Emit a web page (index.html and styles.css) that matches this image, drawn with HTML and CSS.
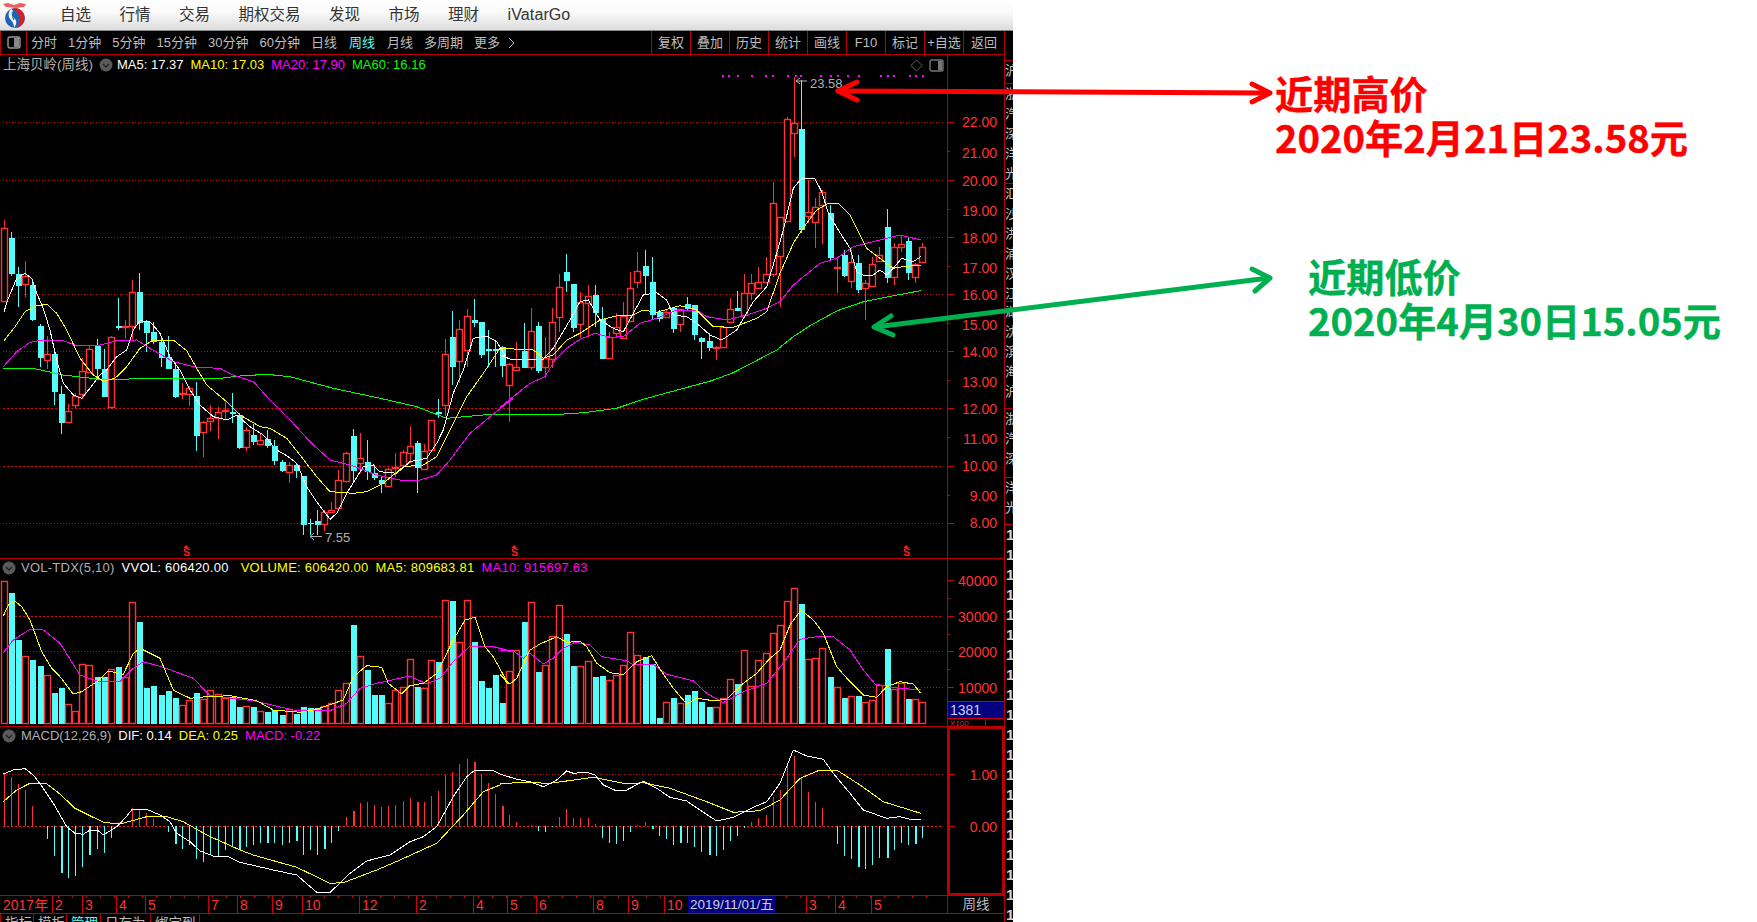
FILE: index.html
```html
<!DOCTYPE html>
<html lang="zh-CN">
<head>
<meta charset="utf-8">
<title>上海贝岭(周线)</title>
<link rel="stylesheet" href="styles.css">
</head>
<body>
<div class="page">
  <div class="terminal">
    <header class="menubar">
      <svg class="logo" viewBox="0 0 30 30" aria-hidden="true">
        <path d="M3 4 L8 3 L14 5 L20 3 L26 4 L24 7 L16 8 L6 7 Z" fill="#e8615f"/>
        <circle cx="15" cy="18" r="10" fill="#1f63b5"/>
        <path d="M13 8.2 A10 10 0 0 1 16 28 C23 22 20 13 13 8.2 Z" fill="#e21d1d"/>
        <path d="M11 9 C15 11 11 15 14 18 C18 21 16 25 14 28 C14 24 13 22 10 19 C8 16 8 12 11 9 Z" fill="#f4f4f4"/>
        <path d="M12 12 C13 15 12 17 14 20" stroke="#1f63b5" stroke-width="1.2" fill="none"/>
      </svg>
      <nav class="menu">
        <span>自选</span><span>行情</span><span>交易</span><span>期权交易</span><span>发现</span><span>市场</span><span>理财</span><span class="menu-latin">iVatarGo</span>
      </nav>
    </header>
    <div class="body">
      <div class="main">
        <div class="toolbar">
          <div class="toggle">
            <svg class="icon-panel" viewBox="0 0 14 13" aria-hidden="true"><rect x="1" y="1" width="12" height="11" rx="2" fill="none" stroke="#999" stroke-width="1.4"/><rect x="7" y="2" width="5" height="9" fill="#888"/></svg>
          </div>
          <div class="periods">
            <span>分时</span><span>1分钟</span><span>5分钟</span><span>15分钟</span><span>30分钟</span><span>60分钟</span><span>日线</span><span class="active">周线</span><span class="after-active">月线</span><span>多周期</span><span>更多</span>
            <svg class="chev" viewBox="0 0 7 12" aria-hidden="true"><path d="M1 1 L6 6 L1 11" fill="none" stroke="#bbb"/></svg>
          </div>
          <div class="actions">
            <span>复权</span><span>叠加</span><span>历史</span><span>统计</span><span>画线</span><span>F10</span><span>标记</span><span>+自选</span><span>返回</span>
          </div>
        </div>

        <section class="pane pane-price">
          <div class="plot">
            <svg id="price" width="947" height="503" viewBox="0 55 947 503"></svg>
            <div class="legend">
              <span class="c-grey name">上海贝岭(周线)</span>
              <svg class="dot dot-name" viewBox="0 0 14 14" aria-hidden="true"><circle cx="7" cy="7" r="6.5" fill="#5a5a5a"/><path d="M4 6 L7 9 L10 6" stroke="#222" stroke-width="1.4" fill="none"/></svg>
              <span class="c-white">MA5: 17.37</span>
              <span class="c-yellow">MA10: 17.03</span>
              <span class="c-magenta">MA20: 17.90</span>
              <span class="c-green">MA60: 16.16</span>
            </div>
            <div class="tools">
              <svg class="tool-diamond" viewBox="0 0 14 14" aria-hidden="true"><path d="M7 1 L13 7 L7 13 L1 7 Z" fill="none" stroke="#666"/></svg>
              <svg class="tool-panel" viewBox="0 0 15 13" aria-hidden="true"><rect x="1" y="1" width="13" height="11" rx="2" fill="none" stroke="#777" stroke-width="1.4"/><rect x="9" y="2" width="4" height="9" fill="#777"/></svg>
            </div>
          </div>
          <div class="axis"><svg id="price-axis" width="56" height="503" viewBox="948 55 56 503"></svg></div>
        </section>

        <section class="pane pane-vol">
          <div class="plot">
            <svg id="vol" width="947" height="167" viewBox="0 559 947 167"></svg>
            <div class="legend legend-vol legend-spaced">
              <svg class="dot" viewBox="0 0 14 14" aria-hidden="true"><circle cx="7" cy="7" r="6.5" fill="#5a5a5a"/><path d="M4 6 L7 9 L10 6" stroke="#222" stroke-width="1.4" fill="none"/></svg>
              <span class="c-grey">VOL-TDX(5,10)</span>
              <span class="c-white">VVOL: 606420.00</span>
              <span class="c-yellow gap-wide">VOLUME: 606420.00</span>
              <span class="c-yellow">MA5: 809683.81</span>
              <span class="c-magenta">MA10: 915697.63</span>
            </div>
          </div>
          <div class="axis"><svg id="vol-axis" width="56" height="167" viewBox="948 559 56 167"></svg></div>
        </section>

        <section class="pane pane-macd">
          <div class="plot">
            <svg id="macd" width="947" height="168" viewBox="0 727 947 168"></svg>
            <div class="legend legend-vol">
              <svg class="dot" viewBox="0 0 14 14" aria-hidden="true"><circle cx="7" cy="7" r="6.5" fill="#5a5a5a"/><path d="M4 6 L7 9 L10 6" stroke="#222" stroke-width="1.4" fill="none"/></svg>
              <span class="c-grey">MACD(12,26,9)</span>
              <span class="c-white">DIF: 0.14</span>
              <span class="c-yellow">DEA: 0.25</span>
              <span class="c-magenta">MACD: -0.22</span>
            </div>
          </div>
          <div class="axis"><svg id="macd-axis" width="56" height="168" viewBox="948 727 56 168"></svg></div>
        </section>

        <section class="pane pane-date">
          <div class="plot"><svg id="dates" width="947" height="17" viewBox="0 896 947 17"></svg></div>
          <div class="axis period-cell">周线</div>
        </section>

        <div class="tabs">
          <span>指标</span><span>模板</span><span class="active">管理</span><span>日存为</span><span>绑定到</span>
        </div>
      </div>
      <aside class="strip" id="strip"></aside>
    </div>
  </div>

  <div class="notes">
    <p class="note note-high">近期高价<br>2020年2月21日23.58元</p>
    <p class="note note-low">近期低价<br>2020年4月30日15.05元</p>
  </div>

  <svg class="arrows" width="1757" height="922" viewBox="0 0 1757 922" aria-hidden="true">
    <g class="arrow-red">
      <path d="M838 91 L1269 93"/>
      <path d="M857 82 L838 91 L857 100"/>
      <path d="M1252 84 L1270 93 L1252 102"/>
    </g>
    <g class="arrow-green">
      <path d="M875 327 L1269 278"/>
      <path d="M891 316 L874 327 L893 335"/>
      <path d="M1252 269 L1270 278 L1255 291"/>
    </g>
  </svg>
</div>
<script src="chart.js"></script>
</body>
</html>
```

FILE: styles.css
```css
* { box-sizing: border-box; }
html, body { margin: 0; padding: 0; background: #fff; }
.page {
  position: relative;
  display: flex;
  width: 1757px;
  height: 922px;
  overflow: hidden;
  font-family: "Liberation Sans", "Noto Sans CJK SC", sans-serif;
}
.terminal {
  width: 1013px;
  height: 922px;
  display: flex;
  flex-direction: column;
  flex: none;
  background: #000;
}
.menubar {
  height: 31px;
  flex: none;
  display: flex;
  align-items: center;
  background: linear-gradient(#fff, #fafafa 40%, #dcdcdc);
  border-bottom: 1px solid #8a8a8a;
}
.logo { width: 30px; height: 30px; flex: none; }
.menu {
  display: flex;
  gap: 28.5px;
  margin-left: 30px;
  font-size: 15.5px;
  color: #333;
  line-height: 28px;
}
.menu-latin { font-size: 16px; letter-spacing: 0.1px; }
.body { flex: 1; display: flex; min-height: 0; }
.main {
  width: 1005px;
  flex: none;
  display: flex;
  flex-direction: column;
  border-right: 1px solid #b80000;
}
.toolbar {
  height: 24px;
  flex: none;
  display: flex;
  align-items: stretch;
  border-bottom: 1px solid #b80000;
  color: #bdbdbd;
  font-size: 13px;
  line-height: 23px;
}
.toggle {
  width: 27px;
  flex: none;
  display: flex;
  align-items: center;
  justify-content: center;
  border-left: 1px solid #b80000;
  border-right: 1px solid #b80000;
}
.icon-panel { width: 14px; height: 13px; }
.periods { display: flex; gap: 11px; margin-left: 4px; align-items: center; }
.periods .active { margin-left: 1px; }
.periods .after-active { margin-left: 1px; }
.periods .active, .tabs .active { color: #54fcfc; }
.chev { width: 7px; height: 12px; margin-left: -3px; }
.actions { display: flex; margin-left: auto; }
.actions span {
  width: 39px;
  text-align: center;
  border-left: 1px solid #b80000;
}
.actions span:last-child { width: 41px; }
.pane { display: flex; flex: none; border-bottom: 1px solid #b80000; }
.pane-price { height: 504px; }
.pane-vol { height: 168px; }
.pane-macd { height: 169px; }
.pane-date { height: 18px; }
.plot { position: relative; width: 947px; flex: none; }
.plot svg:first-child { display: block; }
.axis { width: 57px; flex: none; border-left: 1px solid #b80000; }
.axis svg { display: block; }
.legend {
  position: absolute;
  left: 3px;
  top: 1px;
  display: flex;
  align-items: center;
  gap: 7px;
  font-size: 13px;
  line-height: 18px;
  white-space: nowrap;
}
.legend-vol { left: 2px; top: 0; }
.legend-spaced { letter-spacing: 0.25px; }
.legend .name { font-size: 13.5px; }
.legend .gap-wide { margin-left: 5px; }
.dot { width: 14px; height: 14px; flex: none; margin-right: -2px; }
.dot-name { margin-left: -1px; margin-right: -3px; }
.c-grey { color: #b0b0b0; }
.c-white { color: #fff; }
.c-yellow { color: #ff0; }
.c-magenta { color: #f0f; }
.c-green { color: #0f0; }
.tools {
  position: absolute;
  right: 3px;
  top: 4px;
  display: flex;
  align-items: center;
  gap: 6px;
}
.tool-diamond { width: 13px; height: 13px; display: block; }
.tool-panel { width: 15px; height: 13px; display: block; }
.period-cell { color: #bdbdbd; font-size: 13.5px; line-height: 17px; text-align: center; }
.tabs {
  height: 8px;
  flex: none;
  display: flex;
  overflow: hidden;
  color: #bdbdbd;
  font-size: 13.5px;
  line-height: 14px;
}
.tabs span {
  padding: 3px 4px 0;
  height: 20px;
  border-right: 1px solid #b80000;
  white-space: nowrap;
}
.tabs span:nth-child(1) { width: 34px; border-left: 1px solid #b80000; }
.tabs span:nth-child(2) { width: 33px; }
.tabs span:nth-child(3) { width: 34px; }
.tabs span:nth-child(4) { width: 50px; }
.tabs span:nth-child(5) { width: 49px; }
.strip {
  width: 8px;
  flex: none;
  overflow: hidden;
  padding-top: 29px;
  color: #c8c8c8;
}
.strip-group { border-top: 1px solid #b80000; overflow: hidden; }
.strip-row {
  height: 20px;
  font-size: 13px;
  line-height: 20px;
  white-space: nowrap;
  overflow: hidden;
  width: 8px;
}
.strip-one {
  font-size: 15px;
  font-weight: 700;
  padding-left: 1px;
  color: #d4d4d4;
}
.notes { flex: 1; padding-top: 71px; }
.note {
  margin: 0;
  font-family: "Noto Sans CJK SC", sans-serif;
  font-weight: 700;
  font-size: 38.2px;
  line-height: 44px;
  white-space: nowrap;
  -webkit-text-stroke: 0.4px currentColor;
}
.note-high { margin-left: 262px; color: #f00; }
.note-low { margin-left: 295px; margin-top: 95px; color: #00b050; }
.arrows { position: absolute; left: 0; top: 0; pointer-events: none; }
.arrows path { fill: none; stroke-linecap: round; stroke-linejoin: round; }
.arrow-red path { stroke: #f00; stroke-width: 5; }
.arrow-green path { stroke: #00b050; stroke-width: 5; }

/* chart drawing */
.grid { stroke: #d40000; stroke-dasharray: 1 2; fill: none; }
.grid-bold { stroke: #e00000; stroke-dasharray: 2 2; fill: none; }
.zero { stroke: #ff1a1a; stroke-dasharray: 2 2; fill: none; }
.body-r { fill: #000; stroke: #ff3232; stroke-width: 1.4; }
.body-c { fill: #54fcfc; }
.ma { fill: none; stroke-width: 1; shape-rendering: crispEdges; }
.ma-white { stroke: #fff; }
.ma-yellow { stroke: #ff0; }
.ma-magenta { stroke: #f0f; }
.ma-green { stroke: #0f0; }
.pin { fill: #f0f; }
.mark { fill: #b0b0b0; font-size: 13px; font-family: "Liberation Sans", sans-serif; }
.mark-arrow { stroke: #b0b0b0; fill: none; }
.s-mark { fill: #ff1a1a; font-size: 11px; font-weight: 700; font-family: "Liberation Sans", sans-serif; }
.tick { stroke: #d00000; shape-rendering: crispEdges; }
.axis-label { fill: #ff3232; font-size: 14px; font-family: "Liberation Sans", sans-serif; text-anchor: end; }
.box-line { stroke: #b80000; fill: none; stroke-width: 2; }
.vol-box { fill: #000080; }
.vol-box-text { fill: #c8d0ff; font-size: 14px; font-family: "Liberation Sans", sans-serif; }
.vol-box-under { fill: #c03030; font-size: 8px; font-family: "Liberation Sans", sans-serif; }
.date-sep { stroke: #d00000; shape-rendering: crispEdges; }
.date-label { fill: #ff3232; font-size: 14px; font-family: "Liberation Sans", "Noto Sans CJK SC", sans-serif; }
.date-box { fill: #000080; }
.date-box-text { fill: #d0d0d0; font-size: 13.5px; font-family: "Liberation Sans", "Noto Sans CJK SC", sans-serif; }
```

FILE: chart.js
```js
var NS = 'http://www.w3.org/2000/svg';
function el(tag, attrs, parent, text) {
  var n = document.createElementNS(NS, tag);
  for (var k in attrs) n.setAttribute(k, attrs[k]);
  if (text !== undefined) n.textContent = text;
  parent.appendChild(n);
  return n;
}
function $(id) { return document.getElementById(id); }
function cx(i) { return Math.round(4 + i * 7.117); }

/* [red?, high, bodyTop, bodyBottom, low] in page pixels */
var C = [
[1,220,228,302,302],[0,232,238,274,276],[0,267,274,286,307],[1,261,276,285,297],[0,280,285,320,321],
[0,324,326,358,367],[1,336,354,361,369],[0,349,354,392,405],[0,386,394,423,434],[1,404,411,423,423],
[1,393,396,406,408],[1,358,371,395,399],[1,345,349,373,373],[0,339,346,369,380],[0,349,369,397,397],
[1,336,337,408,409],[0,298,326,328,330],[1,320,326,328,339],[1,280,292,327,339],[0,273,292,323,330],
[0,320,322,333,352],[0,322,332,342,344],[0,336,342,358,367],[0,336,357,369,369],[0,363,369,397,398],
[1,383,393,395,399],[1,386,388,395,406],[0,382,396,436,451],[1,421,422,433,457],[1,405,418,422,431],
[1,407,412,419,439],[1,400,410,412,420],[0,393,412,414,423],[0,413,415,448,449],[1,427,430,448,451],
[0,424,435,442,445],[1,434,440,445,445],[0,430,439,446,448],[0,440,446,461,465],[0,460,462,471,472],
[1,462,465,473,483],[0,463,465,471,478],[0,476,476,525,535],[0,519,523,524,535],[0,510,521,525,535],
[1,510,512,525,531],[1,502,510,513,513],[1,470,480,509,509],[1,452,453,482,482],[0,429,436,471,481],
[1,433,458,464,473],[0,440,462,472,480],[0,465,473,478,480],[0,477,480,484,493],[1,468,469,487,487],
[1,453,467,469,477],[1,450,452,466,468],[1,426,446,454,463],[0,441,443,468,493],[1,444,451,470,470],
[1,420,420,451,451],[0,399,412,414,418],[1,339,354,406,416],[0,311,337,367,385],[1,320,329,362,383],
[1,309,316,351,367],[0,299,320,323,327],[0,322,322,355,358],[0,330,349,351,367],[0,340,349,351,367],
[0,346,347,366,377],[1,363,364,386,422],[1,342,367,371,371],[0,323,351,368,368],[1,308,331,368,370],
[0,322,326,371,373],[1,337,358,368,378],[1,308,322,360,368],[1,274,287,318,332],[0,254,272,281,292],
[0,284,284,328,332],[1,292,302,325,338],[1,285,296,304,337],[0,285,295,313,327],[0,307,319,359,359],
[1,332,337,359,359],[1,313,327,334,336],[1,302,316,339,339],[1,272,288,322,322],[1,252,271,283,288],
[0,250,266,276,295],[0,257,282,315,320],[0,310,312,319,322],[1,310,312,318,318],[0,308,308,329,333],
[1,309,309,325,332],[0,297,304,309,310],[0,305,305,335,340],[0,337,338,342,359],[0,333,341,348,351],
[1,346,347,348,360],[1,327,327,348,348],[1,298,309,323,323],[0,291,308,311,311],[1,274,293,316,316],
[1,274,283,294,300],[1,267,282,289,289],[1,257,274,283,283],[1,182,203,275,277],[1,217,217,257,307],
[1,117,119,222,222],[1,77,123,134,157],[0,80,129,230,233],[1,180,212,217,223],[1,198,207,223,248],
[1,190,192,206,244],[0,205,213,258,260],[1,257,267,269,293],[0,250,255,276,277],[1,250,262,282,288],
[0,255,263,290,293],[1,280,283,289,320],[1,257,264,287,287],[1,247,255,262,262],[0,209,227,278,283],
[1,243,247,278,285],[1,236,244,248,252],[0,237,241,273,280],[1,263,264,278,283],[1,243,247,263,263]
];

/* volume bar tops as measured, y = 540 + v / 3 */
var V = [124,158,300,349,360,378,406,459,444,492,514,372,376,411,411,387,381,412,187,246,444,438,465,453,474,496,481,459,478,451,463,474,471,501,498,501,514,516,510,525,507,522,501,504,504,499,490,451,430,255,349,390,465,465,490,450,442,358,441,445,361,366,181,183,307,181,306,423,444,405,489,394,331,246,187,396,376,289,196,282,378,378,364,411,408,421,405,376,277,346,351,372,534,487,474,490,465,453,486,501,502,475,418,432,331,439,361,340,280,256,184,143,192,358,355,325,411,442,474,469,468,487,481,436,327,448,430,477,478,487];

/* macd bar ends, y = 720 + v / 3; 0 = no bar */
var M = [163,172,192,210,258,0,356,408,458,473,467,441,404,386,398,354,305,0,265,268,280,297,0,335,372,386,375,418,425,404,408,390,380,390,380,375,370,368,370,374,368,362,404,390,404,387,370,332,291,273,249,246,255,260,258,255,243,235,246,246,228,213,165,157,133,118,126,163,190,222,258,285,306,0,316,332,336,319,291,267,294,294,294,312,354,369,372,363,336,316,306,327,348,357,375,369,369,381,396,405,408,390,363,348,324,306,294,285,231,210,136,108,175,216,246,264,0,372,408,417,441,447,435,414,414,390,369,375,372,354];
var MBOLD = {8:1,12:1,24:1,33:1,37:1,41:1,45:1,49:1,58:1,66:1,70:1,91:1,95:1,99:1,120:1,124:1,128:1};

function poly(svg, cls, segs) {
  var pts = [];
  segs.forEach(function (s) {
    for (var i = 0; i < s[2].length; i += 2) {
      pts.push((s[0] + s[2][i] / 3).toFixed(1) + ',' + (s[1] + s[2][i + 1] / 3).toFixed(1));
    }
  });
  el('polyline', { 'class': 'ma ' + cls, points: pts.join(' ') }, svg);
}
function hline(svg, y, cls, x1, x2) {
  el('line', { x1: x1 === undefined ? 3 : x1, x2: x2 === undefined ? 943 : x2, y1: y + 0.5, y2: y + 0.5, 'class': cls }, svg);
}

/* ---------- price pane ---------- */
var price = $('price');
[[122, 0], [180, 0], [237, 0], [294, 0], [351, 0], [408, 1], [466, 1], [523, 0]].forEach(function (g) {
  hline(price, g[0], g[1] ? 'grid-bold' : 'grid');
});
C.forEach(function (c, i) {
  var x = cx(i), red = c[0];
  el('rect', { x: x, y: c[1], width: 1, height: c[4] - c[1], fill: red ? '#ff3232' : '#54fcfc', 'shape-rendering': 'crispEdges' }, price);
  if (red) {
    el('rect', { x: x - 2.5, y: c[2] + 0.5, width: 6, height: Math.max(c[3] - c[2] - 1, 1), 'class': 'body-r' }, price);
  } else {
    el('rect', { x: x - 2, y: c[2], width: 6, height: c[3] - c[2], 'class': 'body-c', 'shape-rendering': 'crispEdges' }, price);
  }
});
poly(price, 'ma-green', [
  [0, 280, [10,265,100,265,190,285,300,298,480,296,660,295,720,288,800,283,870,290,1000,325,1150,357,1250,380,1340,415,1450,405,1560,403]],
  [500, 280, [0,403,180,403,250,398,350,385,430,358,540,328,635,302,700,278,830,210,880,170,930,137,1010,93,1090,65,1180,47,1262,32]]
]);
poly(price, 'ma-magenta', [
  [0, 280, [10,260,50,215,90,187,130,180,190,182,230,197,300,195,350,182,410,180,450,205,520,245,590,262,660,265,700,285,760,305,810,360,870,420,930,485,990,540,1060,558,1130,585,1200,600,1260,600,1310,585,1350,540,1410,460,1470,410,1540,355]],
  [500, 280, [0,382,40,350,90,310,135,290,165,240,200,205,240,178,285,160,330,172,370,170,420,130,470,115,530,90,590,90,620,110,680,120,740,105,800,85,840,65]],
  [500, 0, [880,855,935,810,960,790,1010,775,1060,740,1160,715,1200,705,1262,720]]
]);
poly(price, 'ma-yellow', [
  [0, 280, [12,182,45,140,75,95,110,77,140,72,170,100,200,150,240,235,280,285,310,303,345,295,380,260,420,205,460,180,520,180,560,212,590,265,620,315,680,365,720,405,780,440,810,445,860,475,900,525,950,590,990,635,1060,640,1100,635,1150,610,1210,560,1270,555,1310,530,1350,450,1400,350,1450,280,1500,205]],
  [500, 280, [0,205,60,208,100,210,130,235,160,225,200,180,240,160,300,120,360,105,400,105,430,90,470,97,540,77,590,90,640,140,700,142,770,115,800,95]],
  [500, 0, [840,820,880,730,905,690,950,630,985,610,1015,610,1050,645,1100,745,1140,775,1180,805,1210,800,1262,795]]
]);
poly(price, 'ma-white', [
  [0, 280, [12,95,25,55]],
  [0, 0, [50,835,75,820,95,835,110,880]],
  [0, 280, [130,85,150,150,170,240,190,310,220,345,245,355,270,325,300,285,320,270,350,230,380,210,400,150,420,122,450,125,480,160,510,230,540,270,570,330,600,375,640,410,680,420,710,405,750,440,790,465,830,510,860,527,890,550,920,620,950,665,990,718,1010,700,1040,640,1090,560,1120,555,1140,575,1190,580,1230,545,1280,535,1310,490,1330,450,1360,340,1390,270,1420,175,1460,168,1490,185,1515,225]],
  [500, 280, [0,225,30,237,130,237,160,205,210,120,240,65,265,60,300,120,340,145,370,155,400,100,430,45,470,38,500,60,520,105,560,110,590,130,630,165,665,180,710,150]],
  [500, 0, [760,905,800,860,830,760,850,690,880,565,905,535,945,537,965,575,985,640,1015,690,1050,745,1070,815,1090,825,1120,825,1140,810,1160,825,1180,805,1205,775,1240,785,1262,770]]
]);
[665,685,710,752,795,815,860,885,900,960,990,1010,1040,1075,1140,1160,1180,1228,1245,1265].forEach(function (z) {
  el('rect', { x: Math.round(500 + z / 3), y: 75, width: 2, height: 2, 'class': 'pin' }, price);
});
el('path', { d: 'M807 81 H796 M800 78 L796 81 L800 84', 'class': 'mark-arrow' }, price);
el('text', { x: 810, y: 88, 'class': 'mark' }, price, '23.58');
el('path', { d: 'M322 536.5 H310 M314 533 L310 536.5 L314 540', 'class': 'mark-arrow' }, price);
el('text', { x: 325, y: 542, 'class': 'mark' }, price, '7.55');
[186, 514, 906].forEach(function (x) {
  el('path', { d: 'M' + (x - 3) + ' 548 L' + x + ' 545 L' + (x + 3) + ' 548 Z', fill: '#ff1a1a' }, price);
  el('text', { x: x - 3, y: 556, 'class': 's-mark' }, price, 'S');
});

var pa = $('price-axis');
[[122,'22.00',1,127],[151,'21.00',0,158],[180,'20.00',1,186],[209,'19.00',0,216],[237,'18.00',1,243],[266,'17.00',0,273],[294,'16.00',1,300],[323,'15.00',0,330],[351,'14.00',1,357],[380,'13.00',0,387],[408,'12.00',1,414],[437,'11.00',0,444],[466,'10.00',1,471],[495,'9.00',0,501],[523,'8.00',1,528]].forEach(function (t) {
  el('line', { x1: 948, x2: t[2] ? 954 : 950, y1: t[0] + 0.5, y2: t[0] + 0.5, 'class': 'tick' }, pa);
  el('text', { x: 997, y: t[3], 'class': 'axis-label' }, pa, t[1]);
});

/* ---------- volume pane ---------- */
var vol = $('vol');
hline(vol, 616, 'grid-bold'); hline(vol, 651, 'grid'); hline(vol, 687, 'grid');
V.forEach(function (v, i) {
  var x = cx(i), top = Math.round(540 + v / 3);
  if (C[i][0]) {
    el('rect', { x: x - 2.5, y: top + 0.5, width: 6, height: 724 - top - 1, 'class': 'body-r' }, vol);
  } else {
    el('rect', { x: x - 2, y: top, width: 6, height: 724 - top, 'class': 'body-c', 'shape-rendering': 'crispEdges' }, vol);
  }
});
poly(vol, 'ma-magenta', [
  [0, 540, [10,338,40,300,90,268,130,270,180,310,240,405,290,423,360,425,400,385,430,365,490,382,580,415,630,467,760,482,880,510,990,512,1040,490,1080,445,1130,430,1230,408,1280,432,1320,415,1360,365,1410,318,1480,320,1540,335]],
  [500, 540, [0,330,40,333,70,355,90,340,130,372,160,355,190,325,225,307,270,315,305,350,380,362,400,375,460,373,500,403,580,422,620,460,670,488,730,455,800,430,850,370,900,298,950,290,1000,290,1050,330,1090,390,1125,432,1180,443,1262,450]]
]);
poly(vol, 'ma-yellow', [
  [0, 540, [10,228,25,195,45,184,65,200,90,240,125,335,155,385,180,410,220,462,245,455,290,425,325,393,370,403,400,340,420,325,480,355,520,450,570,475,620,470,690,467,770,482,820,510,900,517,950,508,1030,480,1060,410,1100,377,1145,382,1165,430,1205,462,1230,437,1270,430,1310,400,1360,300,1395,240,1425,232,1455,320,1480,350,1525,432]],
  [500, 540, [0,403,30,432,50,415,90,330,120,312,170,290,200,307,240,304,260,320,290,370,330,398,370,404,410,365,455,347,485,395,520,445,560,492,590,475,640,482,680,478,730,430,770,400,810,355,840,330,870,255,903,210,940,240,970,280,1010,380,1050,425,1090,465,1130,472,1160,440,1200,425,1240,432,1262,460]]
]);

var va = $('vol-axis');
[[580,'40000',1,586],[598,'',0],[616,'30000',1,622],[634,'',0],[651,'20000',1,657],[669,'',0],[687,'10000',1,693]].forEach(function (t) {
  el('line', { x1: 948, x2: t[2] ? 954 : 950, y1: t[0] + 0.5, y2: t[0] + 0.5, 'class': 'tick' }, va);
  if (t[1]) el('text', { x: 997, y: t[3], 'class': 'axis-label' }, va, t[1]);
});
el('text', { x: 950, y: 725.5, 'class': 'vol-box-under' }, va, 'X100');
el('rect', { x: 948, y: 702, width: 56, height: 16, 'class': 'vol-box' }, va);
el('line', { x1: 948, x2: 1004, y1: 701.5, y2: 701.5, 'class': 'tick' }, va);
el('line', { x1: 948, x2: 1004, y1: 718.5, y2: 718.5, 'class': 'tick' }, va);
el('line', { x1: 985.5, x2: 985.5, y1: 718, y2: 726, 'class': 'tick' }, va);
el('text', { x: 950, y: 715, 'class': 'vol-box-text' }, va, '1381');

/* ---------- macd pane ---------- */
var macd = $('macd');
hline(macd, 774, 'grid');
hline(macd, 826, 'zero');
M.forEach(function (v, i) {
  if (!v) return;
  var y = Math.round(720 + v / 3), x = cx(i), red = y < 826;
  el('rect', { x: x, y: Math.min(y, 826), width: MBOLD[i] ? 2 : 1, height: Math.max(Math.abs(y - 826), 1), fill: red ? '#ff3232' : '#54fcfc', 'shape-rendering': 'crispEdges' }, macd);
});
poly(macd, 'ma-yellow', [
  [0, 720, [10,245,50,210,90,190,140,192,180,222,225,265,310,307,360,312,440,290,500,290,550,305,620,345,720,390,760,405,890,442,990,490,1030,488,1130,450,1200,420,1310,370,1390,285,1450,215,1500,195]],
  [500, 720, [0,192,60,187,150,190,280,172,380,192,430,188,510,205,620,245,700,277,780,272,840,240,900,175,960,150,1010,150,1080,195,1150,245,1262,280]]
]);
poly(macd, 'ma-white', [
  [0, 720, [10,162,40,150,75,146,100,165,130,205,160,250,200,320,225,340,250,343,270,330,295,332,310,345,350,320,375,295,395,270,440,268,480,285,510,305,530,340,570,365,600,393,640,408,680,408,720,427,820,450,890,465,950,517,990,517,1030,480,1050,460,1100,423,1170,405,1230,365,1270,350,1310,320,1360,230,1400,170,1425,150,1480,152]],
  [500, 720, [0,162,50,178,90,185,130,200,170,180,200,153,220,160,260,157,285,165,310,195,350,213,380,210,430,184,470,205,510,232,560,243,600,270,650,303,700,292,760,262,800,245,840,190,880,90,920,108,970,118,1000,160,1050,220,1090,270,1160,295,1200,290,1240,300,1262,298]]
]);

var ma = $('macd-axis');
el('rect', { x: 949, y: 728, width: 54, height: 166, 'class': 'box-line' }, ma);
el('line', { x1: 950, x2: 955, y1: 774.5, y2: 774.5, 'class': 'tick' }, ma);
el('line', { x1: 950, x2: 955, y1: 826.5, y2: 826.5, 'class': 'tick' }, ma);
el('text', { x: 997, y: 780, 'class': 'axis-label' }, ma, '1.00');
el('text', { x: 997, y: 832, 'class': 'axis-label' }, ma, '0.00');

/* ---------- date axis ---------- */
var d = $('dates');
for (var t = 30; t < 940; t += 14) {
  el('line', { x1: t + 0.5, x2: t + 0.5, y1: 896, y2: 898, 'class': 'date-sep' }, d);
}
[[52,'2'],[82,'3'],[116,'4'],[145,'5'],[208,'7'],[237,'8'],[272,'9'],[302,'10'],[359,'12'],[416,'2'],[473,'4'],[507,'5'],[536,'6'],[593,'8'],[628,'9'],[664,'10'],[806,'3'],[835,'4'],[871,'5']].forEach(function (s) {
  var x = s[0];
  el('line', { x1: x + 0.5, x2: x + 0.5, y1: 896, y2: 913, 'class': 'date-sep' }, d);
  el('text', { x: x + 3, y: 910, 'class': 'date-label' }, d, s[1]);
});
el('text', { x: 3, y: 910, 'class': 'date-label' }, d, '2017年');
el('rect', { x: 688, y: 896, width: 87, height: 17, 'class': 'date-box' }, d);
el('text', { x: 690, y: 909, 'class': 'date-box-text' }, d, '2019/11/01/五');

/* ---------- right-hand strip, a list cut off by the window edge ---------- */
var strip = $('strip');
var glyphs = '沪浙汽深洋光汇沙洪浦汉江湖沈滨海';
var g = 0;
[[23, 1], [100, 5], [118, 6], [107, 5], [69, 3], [47, 2]].forEach(function (sec) {
  var box = document.createElement('div');
  box.className = 'strip-group';
  box.style.height = sec[0] + 'px';
  for (var i = 0; i < sec[1]; i++) {
    var r = document.createElement('div');
    r.className = 'strip-row';
    r.textContent = glyphs.charAt(g++ % glyphs.length);
    box.appendChild(r);
  }
  strip.appendChild(box);
});
var last = document.createElement('div');
last.className = 'strip-group';
for (var n = 0; n < 20; n++) {
  var o = document.createElement('div');
  o.className = 'strip-row strip-one';
  o.textContent = '1';
  last.appendChild(o);
}
strip.appendChild(last);
```
